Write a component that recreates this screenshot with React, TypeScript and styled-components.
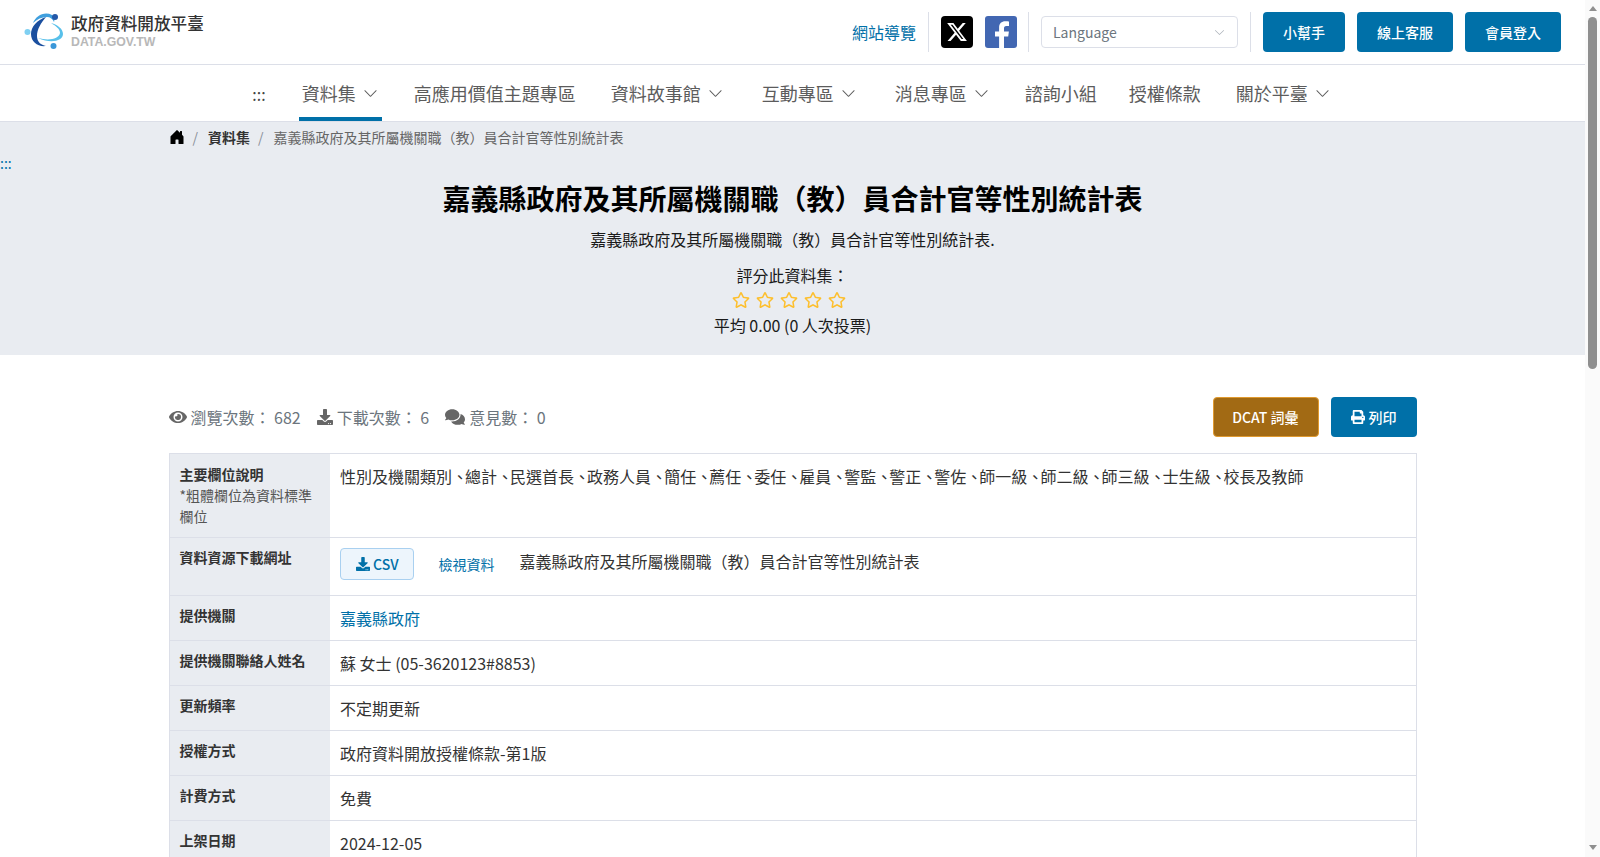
import React from 'react';
import styled, { createGlobalStyle } from 'styled-components';
import { BsChevronDown, BsHouseDoorFill } from 'react-icons/bs';
import { FaComments, FaDownload, FaEye, FaPrint, FaRegStar } from 'react-icons/fa';

const TITLE = '嘉義縣政府及其所屬機關職（教）員合計官等性別統計表';
const BLUE = '#0070a8';

const GlobalStyle = createGlobalStyle`
	html, body {
		margin: 0;
		padding: 0;
		background: #fff;
		color: #333;
		font-family: 'Noto Sans CJK TC', 'Noto Sans', sans-serif;
		font-size: 16px;
		line-height: 1.5;
	}
	body {
		padding-right: 15px;
	}
	* {
		box-sizing: border-box;
	}
`;

// the headless browser hides the real scrollbar, so it is drawn over the page edge
const ScrollTrack = styled.div`
	position: fixed;
	top: 0;
	right: 0;
	display: flex;
	flex-direction: column;
	align-items: center;
	width: 15px;
	height: 100vh;
	padding: 6px 0 7px;
	background: #fafafa;
`;

const ScrollArrow = styled.span<{ $down?: boolean }>`
	width: 0;
	height: 0;
	border-left: 4.5px solid transparent;
	border-right: 4.5px solid transparent;
	border-bottom: ${({ $down }) => ($down ? '0' : '5px solid #8f8f8f')};
	border-top: ${({ $down }) => ($down ? '5px solid #8f8f8f' : '0')};
`;

const ScrollThumb = styled.span`
	width: 9px;
	height: 352px;
	margin-top: 6px;
	margin-bottom: auto;
	border-radius: 5px;
	background: #8f8f8f;
`;

const TopBar = styled.header`
	display: flex;
	align-items: center;
	height: 65px;
	padding: 0 24px;
	border-bottom: 1px solid #dcdfe8;
`;

const Logo = styled.a`
	display: flex;
	align-items: center;
	gap: 7px;
	margin-right: auto;
`;

const LogoText = styled.div`
	display: flex;
	flex-direction: column;
	padding-bottom: 1.5px;
`;

const LogoName = styled.span`
	margin-bottom: 1.5px;
	font-size: 16.6px;
	font-weight: 500;
	line-height: 20px;
	color: #333;
`;

const LogoDomain = styled.span`
	font-family: 'Liberation Sans', sans-serif;
	font-size: 12.3px;
	font-weight: 700;
	line-height: 15px;
	color: #b8b8b8;
`;

const SiteMapLink = styled.a`
	font-size: 16px;
	color: ${BLUE};
`;

const Divider = styled.span`
	width: 1px;
	height: 40px;
	margin: 0 12px;
	background: #dcdfe8;
`;

const SocialGroup = styled.div`
	display: flex;
	align-items: center;
	gap: 12px;
	margin-right: -1px;
`;

const XBadge = styled.span`
	display: flex;
	align-items: center;
	justify-content: center;
	width: 32px;
	height: 32px;
	border-radius: 4px;
	background: #000;
`;

const LanguageSelect = styled.div`
	display: flex;
	align-items: center;
	justify-content: space-between;
	width: 197px;
	height: 32px;
	padding: 0 12px 0 11px;
	border: 1px solid #dcdfe8;
	border-radius: 4px;
	font-size: 14px;
	color: #6c757d;

	svg {
		width: 11px;
		height: 11px;
		color: #aab0b8;
	}
`;

const HeaderButton = styled.button<{ $first?: boolean }>`
	height: 40px;
	margin-left: ${({ $first }) => ($first ? '0' : '12px')};
	padding: 0 20px;
	border: none;
	border-radius: 4px;
	background: ${BLUE};
	color: #fff;
	font-family: inherit;
	font-size: 14px;
	font-weight: 500;
`;

const Nav = styled.nav`
	display: flex;
	align-items: flex-end;
	justify-content: center;
	height: 56px;
	padding-left: 4px;
	gap: 26px;
	font-size: 18px;
	color: #5c5c5c;
`;

const NavDots = styled.span`
	padding: 0 4px 15px 0;
	font-size: 16px;
	line-height: 24px;
	color: #444;
`;

const NavItem = styled.a<{ $active?: boolean; $menu?: boolean }>`
	display: flex;
	align-items: center;
	gap: 7px;
	height: 52px;
	margin: 0 ${({ $menu }) => ($menu ? '3px' : '0')};
	padding: 0 3px;
	border-bottom: 4px solid ${({ $active }) => ($active ? BLUE : 'transparent')};

	svg {
		width: 15px;
		height: 15px;
		margin-right: 1px;
	}
`;

const Hero = styled.section`
	display: flex;
	flex-direction: column;
	height: 234px;
	border-top: 1px solid #dcdfe8;
	background: #e9ecf1;
`;

const Breadcrumb = styled.ol`
	display: flex;
	align-items: center;
	width: 1272px;
	height: 30px;
	margin: 0 auto;
	padding: 0 12px;
	list-style: none;
	font-size: 14px;
	color: #555;
`;

const Crumb = styled.li<{ $strong?: boolean }>`
	display: flex;
	align-items: center;
	font-weight: ${({ $strong }) => ($strong ? 700 : 400)};
	color: ${({ $strong }) => ($strong ? '#333' : '#666')};

	svg {
		display: block;
		width: 16px;
		height: 16px;
		color: #000;
	}
`;

const CrumbSeparator = styled.span`
	margin: 0 10px 0 8px;
	color: #8a9099;
`;

const SkipDots = styled.a`
	display: block;
	height: 25px;
	font-size: 14px;
	line-height: 22px;
	color: ${BLUE};
`;

const HeroBody = styled.div`
	display: flex;
	flex-direction: column;
	align-items: center;
	color: #1a1a1a;
`;

const Title = styled.h1`
	margin: 0 0 8px;
	font-size: 28px;
	font-weight: 700;
	line-height: 42px;
	color: #000;
`;

const Subtitle = styled.p`
	margin: 0 0 12px;
	font-size: 16px;
	line-height: 24px;
`;

const RateLabel = styled.div`
	font-size: 16px;
	line-height: 25px;
`;

const Stars = styled.div`
	display: flex;
	gap: 6px;
	height: 23px;
	margin-right: 8px;
	align-items: center;

	svg {
		width: 18px;
		height: 18px;
		color: #fdbf2d;
	}
`;

const RateSummary = styled.div`
	font-size: 16px;
	line-height: 28px;
`;

const Container = styled.main`
	width: 1272px;
	margin: 0 auto;
	padding: 42px 12px 0;
`;

const StatsRow = styled.div`
	display: flex;
	align-items: center;
	height: 40px;
	margin-bottom: 16px;
`;

const Stat = styled.span<{ $icon: number }>`
	display: flex;
	align-items: center;
	gap: 4px;
	margin-right: 16px;
	color: #6c757d;

	svg {
		width: ${({ $icon }) => $icon}px;
		height: ${({ $icon }) => $icon}px;
		color: #666;
	}
`;

const DcatButton = styled.button`
	height: 40px;
	margin-left: auto;
	padding: 0 19px 0 18px;
	border: 1px solid #e09a30;
	border-radius: 4px;
	background: #a26a14;
	color: #fff;
	font-family: inherit;
	font-size: 14px;
	font-weight: 500;
`;

const PrintButton = styled.button`
	display: flex;
	align-items: center;
	gap: 4px;
	height: 40px;
	margin-left: 12px;
	padding: 0 20px;
	border: none;
	border-radius: 4px;
	background: ${BLUE};
	color: #fff;
	font-family: inherit;
	font-size: 14px;
	font-weight: 500;

	svg {
		width: 14px;
		height: 14px;
	}
`;

const MetaTable = styled.table`
	width: 100%;
	border-collapse: collapse;
	border: 1px solid #dcdfe8;
`;

const MetaRow = styled.tr`
	border-bottom: 1px solid #dcdfe8;
`;

const MetaHead = styled.th<{ $tall?: boolean }>`
	width: 161px;
	padding: ${({ $tall }) => ($tall ? '10px' : '9px 10px 10px')};
	background: #e9ecf1;
	font-size: 14px;
	font-weight: 700;
	text-align: left;
	vertical-align: top;
	color: #333;
`;

const HeadNote = styled.span`
	display: block;
	font-weight: 400;
	color: #555;
`;

const MetaCell = styled.td`
	padding: 10px;
	font-size: 16px;
	color: #333;
	vertical-align: top;
`;

const FieldComma = styled.span`
	margin-right: -3px;
`;

const ResourceLine = styled.div`
	display: flex;
	align-items: flex-start;
	gap: 24px;
	height: 32px;
	margin-bottom: 5px;
`;

const CsvButton = styled.a`
	display: flex;
	align-items: center;
	gap: 3px;
	height: 32px;
	padding: 0 15px;
	border: 1px solid #a9d0f0;
	border-radius: 4px;
	background: #edf5fc;
	color: ${BLUE};
	font-size: 14px;
	font-weight: 500;

	svg {
		width: 14px;
		height: 14px;
	}
`;

const ViewLink = styled.a`
	margin: 4px 1px 0 0;
	font-size: 14px;
	line-height: 24px;
	color: ${BLUE};
`;

const ResourceName = styled.span`
	margin-top: 1px;
`;

const OrgLink = styled.a`
	color: ${BLUE};
`;

const Footer = styled.footer`
	height: 680px;
	margin-top: 60px;
	padding: 40px 169px;
	background: #e9ecf1;
	font-size: 14px;
	color: #555;
`;

const LogoMark = () => (
	<svg width="40" height="38" viewBox="0 0 40 38">
		<path d="M9 10C12 3 20-2 28 2c2 1 3 4 2 7-1-3-4-5-7-5-5 0-10 2-14 6Z" fill="#3f9fde" />
		<path d="M22 4C13 7 7 14 7 21c0 8 7 13 15 12-5-1-9-4-9-10 0-7 4-13 9-19Z" fill="#1b4f9f" />
		<path d="M27 10c7 2 12 6 12 11 0 7-12 10-25 4 11 3 21 1 22-5 0-4-4-7-9-10Z" fill="#58c0ea" />
		<circle cx="31" cy="4" r="3" fill="#2458a8" />
		<circle cx="3.5" cy="19" r="3" fill="#7fd0f2" />
		<circle cx="29.5" cy="33" r="3" fill="#3a97d8" />
	</svg>
);

const XLogo = () => (
	<svg width="22" height="22" viewBox="0 0 24 24" fill="#fff">
		<path d="M18.244 2.25h3.308l-7.227 8.26 8.502 11.24H16.17l-5.214-6.817L4.99 21.75H1.68l7.73-8.835L1.254 2.25H8.08l4.713 6.231zm-1.161 17.52h1.833L7.084 4.126H5.117z" />
	</svg>
);

const FacebookLogo = () => (
	<svg width="32" height="32" viewBox="0 0 32 32">
		<rect width="32" height="32" rx="3" fill="#4267b2" />
		<path d="M19 32V20.5h4.2l.7-5H19v-3.2c0-1.4.4-2.4 2.4-2.4H24V5.4c-.5-.1-2-.2-3.7-.2-3.7 0-6.2 2.2-6.2 6.3v4H10v5h4.1V32z" fill="#fff" />
	</svg>
);

const navItems = [
	{ label: '資料集', menu: true, active: true },
	{ label: '高應用價值主題專區' },
	{ label: '資料故事館', menu: true },
	{ label: '互動專區', menu: true },
	{ label: '消息專區', menu: true },
	{ label: '諮詢小組' },
	{ label: '授權條款' },
	{ label: '關於平臺', menu: true },
];

const fieldNames = ['性別及機關類別', '總計', '民選首長', '政務人員', '簡任', '薦任', '委任', '雇員', '警監', '警正', '警佐', '師一級', '師二級', '師三級', '士生級', '校長及教師'];

const simpleRows = [
	['提供機關聯絡人姓名', '蘇 女士 (05-3620123#8853)'],
	['更新頻率', '不定期更新'],
	['授權方式', '政府資料開放授權條款-第1版'],
	['計費方式', '免費'],
	['上架日期', '2024-12-05'],
	['詮釋資料更新時間', '2024-12-05'],
	['資料集類型', '原始資料'],
	['編碼格式', 'UTF-8'],
	['資料量', '1'],
	['備註', ''],
];

const App = () => {
	return (
		<>
			<GlobalStyle />
			<TopBar>
				<Logo>
					<LogoMark />
					<LogoText>
						<LogoName>政府資料開放平臺</LogoName>
						<LogoDomain>DATA.GOV.TW</LogoDomain>
					</LogoText>
				</Logo>
				<SiteMapLink>網站導覽</SiteMapLink>
				<Divider />
				<SocialGroup>
					<XBadge><XLogo /></XBadge>
					<FacebookLogo />
				</SocialGroup>
				<Divider />
				<LanguageSelect>
					Language
					<BsChevronDown />
				</LanguageSelect>
				<Divider />
				<HeaderButton $first>小幫手</HeaderButton>
				<HeaderButton>線上客服</HeaderButton>
				<HeaderButton>會員登入</HeaderButton>
			</TopBar>

			<Nav>
				<NavDots>:::</NavDots>
				{navItems.map(item => (
					<NavItem key={item.label} $active={item.active} $menu={item.menu}>
						{item.label}
						{item.menu && <BsChevronDown />}
					</NavItem>
				))}
			</Nav>

			<Hero>
				<Breadcrumb>
					<Crumb><BsHouseDoorFill /></Crumb>
					<CrumbSeparator>/</CrumbSeparator>
					<Crumb $strong>資料集</Crumb>
					<CrumbSeparator>/</CrumbSeparator>
					<Crumb>{TITLE}</Crumb>
				</Breadcrumb>
				<SkipDots>:::</SkipDots>
				<HeroBody>
					<Title>{TITLE}</Title>
					<Subtitle>{TITLE}.</Subtitle>
					<RateLabel>評分此資料集：</RateLabel>
					<Stars>
						{[1, 2, 3, 4, 5].map(n => <FaRegStar key={n} />)}
					</Stars>
					<RateSummary>平均 0.00 (0 人次投票)</RateSummary>
				</HeroBody>
			</Hero>

			<Container>
				<StatsRow>
					<Stat $icon={18}><FaEye />瀏覽次數： 682</Stat>
					<Stat $icon={16}><FaDownload />下載次數： 6</Stat>
					<Stat $icon={20}><FaComments />意見數： 0</Stat>
					<DcatButton>DCAT 詞彙</DcatButton>
					<PrintButton><FaPrint />列印</PrintButton>
				</StatsRow>

				<MetaTable>
					<tbody>
						<MetaRow>
							<MetaHead $tall>
								主要欄位說明
								<HeadNote>*粗體欄位為資料標準欄位</HeadNote>
							</MetaHead>
							<MetaCell>
								{fieldNames.map((name, i) => (
									<React.Fragment key={name}>
										{name}
										{i < fieldNames.length - 1 && <FieldComma>、</FieldComma>}
									</React.Fragment>
								))}
							</MetaCell>
						</MetaRow>
						<MetaRow>
							<MetaHead>資料資源下載網址</MetaHead>
							<MetaCell>
								<ResourceLine>
									<CsvButton><FaDownload />CSV</CsvButton>
									<ViewLink>檢視資料</ViewLink>
									<ResourceName>{TITLE}</ResourceName>
								</ResourceLine>
							</MetaCell>
						</MetaRow>
						<MetaRow>
							<MetaHead>提供機關</MetaHead>
							<MetaCell><OrgLink>嘉義縣政府</OrgLink></MetaCell>
						</MetaRow>
						{simpleRows.map(([head, value]) => (
							<MetaRow key={head}>
								<MetaHead>{head}</MetaHead>
								<MetaCell>{value}</MetaCell>
							</MetaRow>
						))}
					</tbody>
				</MetaTable>
			</Container>

			<Footer>政府資料開放平臺</Footer>

			<ScrollTrack>
				<ScrollArrow />
				<ScrollThumb />
				<ScrollArrow $down />
			</ScrollTrack>
		</>
	);
};

export default App;
